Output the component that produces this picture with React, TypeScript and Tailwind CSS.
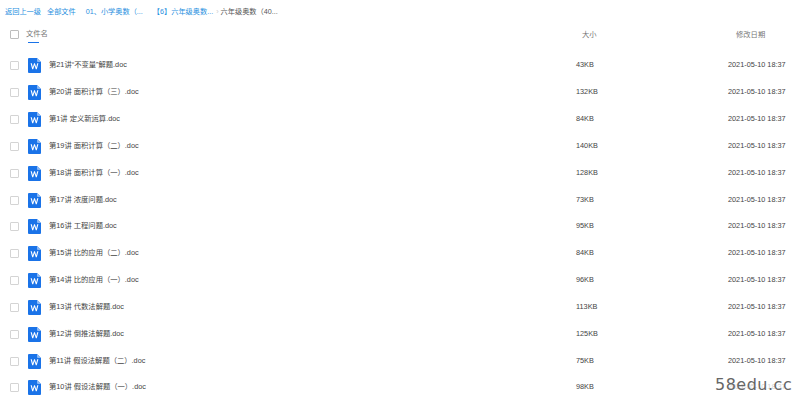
import React from 'react';

const files = [
  { name: '第21讲“不变量”解题.doc', size: '43KB' },
  { name: '第20讲 面积计算（三）.doc', size: '132KB' },
  { name: '第1讲 定义新运算.doc', size: '84KB' },
  { name: '第19讲 面积计算（二）.doc', size: '140KB' },
  { name: '第18讲 面积计算（一）.doc', size: '128KB' },
  { name: '第17讲 浓度问题.doc', size: '73KB' },
  { name: '第16讲 工程问题.doc', size: '95KB' },
  { name: '第15讲 比的应用（二）.doc', size: '84KB' },
  { name: '第14讲 比的应用（一）.doc', size: '96KB' },
  { name: '第13讲 代数法解题.doc', size: '113KB' },
  { name: '第12讲 倒推法解题.doc', size: '125KB' },
  { name: '第11讲 假设法解题（二）.doc', size: '75KB' },
  { name: '第10讲 假设法解题（一）.doc', size: '98KB' },
];

const WordIcon = () => (
  <svg width="13" height="15" viewBox="0 0 13 15" className="shrink-0">
    <path d="M1 0H9L13 4V14a1 1 0 0 1-1 1H1a1 1 0 0 1-1-1V1a1 1 0 0 1 1-1Z" fill="#1a73e8" />
    <path d="M9 0L13 4H10a1 1 0 0 1-1-1Z" fill="#8ab8f5" />
    <path d="M2.6 5.2L4.2 11.2H5.2L6.5 7.2L7.8 11.2H8.8L10.4 5.2H9.2L8.2 9.2L6.95 5.2H6.05L4.8 9.2L3.8 5.2Z" fill="#ffffff" />
  </svg>
);

const Checkbox = () => (
  <div className="w-[7px] h-[7px] box-content border border-[#d4d4d4] rounded-[1px] bg-white shrink-0" />
);

export default function App() {
  return (
    <div className="relative w-[800px] h-[401px] overflow-hidden bg-white text-[7.3px] text-[#555] font-['Liberation_Sans','Noto_Sans_CJK_SC',sans-serif]">
      <div className="h-[24px] pl-[5px] flex items-center text-[7.2px] text-[#1f8fe0] whitespace-nowrap">
        <span>返回上一级</span>
        <span className="ml-[6px]">全部文件</span>
        <span className="ml-[10px]">01、小学奥数（...</span>
        <span className="ml-[10px]">【6】六年级奥数...</span>
        <span className="ml-[3px] text-[#ccc]">›</span>
        <span className="ml-[2px] text-[#555]">六年级奥数（40...</span>
      </div>

      <div className="h-[21px] flex items-center text-[#777]">
        <div className="ml-[10px]">
          <div className="w-[7px] h-[7px] box-content border border-[#bdbdbd] rounded-[1px]" />
        </div>
        <div className="ml-[7px] relative">
          文件名
          <div className="absolute left-[2px] top-[13px] w-[11px] h-px bg-[#1a73e8]" />
        </div>
        <div className="absolute left-[582px] top-[30px]">大小</div>
        <div className="absolute left-[736px] top-[30px]">修改日期</div>
      </div>

      <div className="pt-[7.5px]">
        {files.map((f) => (
          <div key={f.name} className="h-[26.83px] flex items-center whitespace-nowrap text-[#444]">
            <div className="ml-[10px]"><Checkbox /></div>
            <div className="ml-[9px]"><WordIcon /></div>
            <div className="ml-[8px] w-[527px]">{f.name}</div>
            <div className="w-[152px]">{f.size}</div>
            <div>2021-05-10 18:37</div>
          </div>
        ))}
      </div>

      <div className="absolute left-[714px] top-[376px] px-px bg-white/75 text-[16px] text-[#666] leading-[18px] tracking-[0.5px] font-['DejaVu_Sans',sans-serif] whitespace-nowrap">
        58edu.cc
      </div>
    </div>
  );
}
